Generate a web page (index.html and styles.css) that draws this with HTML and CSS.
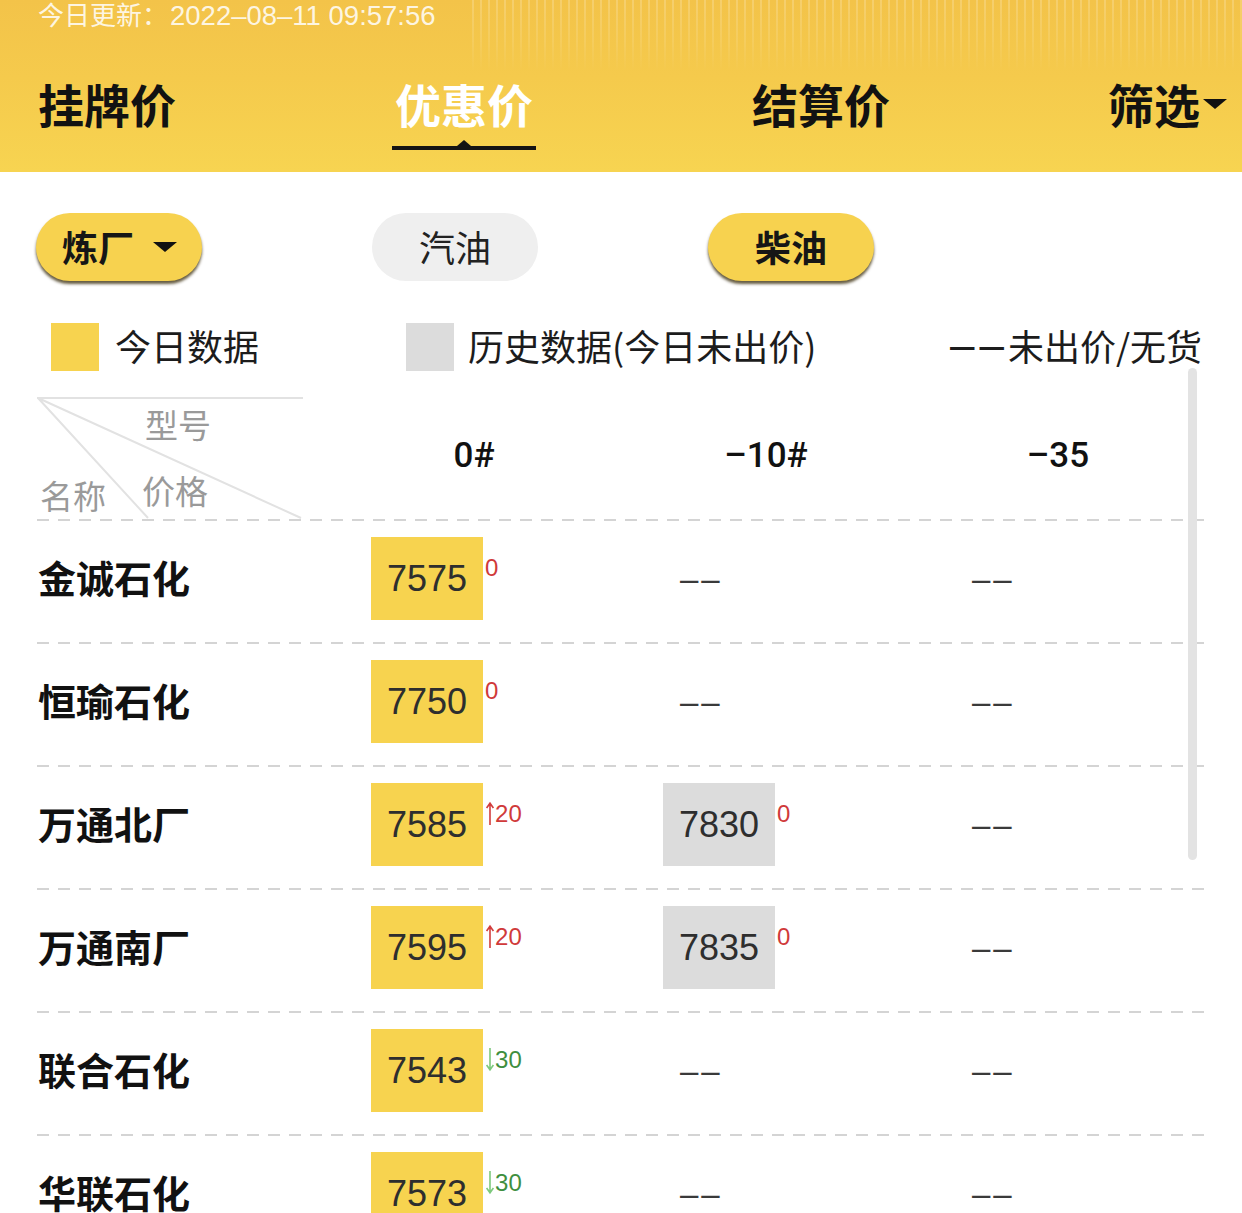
FILE: index.html
```html
<!DOCTYPE html>
<html lang="zh-CN">
<head>
<meta charset="utf-8">
<title>优惠价</title>
<link rel="stylesheet" href="styles.css">
</head>
<body>
<div class="page">
  <header class="top">
    <div class="stamp">今日更新：<span class="time">2022–08–11 09:57:56</span></div>
    <nav class="tabs">
      <div class="tab">挂牌价</div>
      <div class="tab active"><span>优惠价</span><i class="bar"></i></div>
      <div class="tab">结算价</div>
      <div class="tab filter">筛选<svg class="caret" width="26" height="12" viewBox="0 0 26 12"><path d="M1 1h24L13 11z" fill="#111"/></svg></div>
    </nav>
  </header>

  <section class="pills">
    <div class="pill on"><span>炼厂</span><svg class="caret" width="26" height="12" viewBox="0 0 26 12"><path d="M1 1h24L13 11z" fill="#111"/></svg></div>
    <div class="pill off">汽油</div>
    <div class="pill on">柴油</div>
  </section>

  <section class="legend">
    <div class="item"><i class="sq today"></i><span>今日数据</span></div>
    <div class="item"><i class="sq hist"></i><span>历史数据(今日未出价)</span></div>
    <div class="item"><span class="ldash">––</span><span>未出价/无货</span></div>
  </section>

  <div class="table">
    <div class="thead dashed">
      <div class="corner">
        <svg class="diag" width="266" height="122" viewBox="0 0 266 122">
          <path d="M0 1H266M1 1L111 121M1 1L264 121" stroke="#e2e2e2" stroke-width="2" fill="none"/>
        </svg>
        <span class="lab l1">型号</span>
        <span class="lab l2">名称</span>
        <span class="lab l3">价格</span>
      </div>
      <div class="th"><span>0#</span></div>
      <div class="th"><span>–10#</span></div>
      <div class="th"><span>–35</span></div>
    </div>

    <div class="row dashed">
      <div class="name">金诚石化</div>
      <div class="cell"><span class="box today">7575</span><span class="chg up">0</span></div>
      <div class="cell"><span class="none">––</span></div>
      <div class="cell"><span class="none">––</span></div>
    </div>

    <div class="row dashed">
      <div class="name">恒瑜石化</div>
      <div class="cell"><span class="box today">7750</span><span class="chg up">0</span></div>
      <div class="cell"><span class="none">––</span></div>
      <div class="cell"><span class="none">––</span></div>
    </div>

    <div class="row dashed">
      <div class="name">万通北厂</div>
      <div class="cell"><span class="box today">7585</span><span class="chg up"><svg class="arr" width="10" height="25" viewBox="0 0 10 25"><path d="M5 24V2.5M1.6 7L5 2.2l3.4 4.8" stroke="#d23c3c" stroke-width="1.6" fill="none"/></svg>20</span></div>
      <div class="cell"><span class="box hist">7830</span><span class="chg up">0</span></div>
      <div class="cell"><span class="none">––</span></div>
    </div>

    <div class="row dashed">
      <div class="name">万通南厂</div>
      <div class="cell"><span class="box today">7595</span><span class="chg up"><svg class="arr" width="10" height="25" viewBox="0 0 10 25"><path d="M5 24V2.5M1.6 7L5 2.2l3.4 4.8" stroke="#d23c3c" stroke-width="1.6" fill="none"/></svg>20</span></div>
      <div class="cell"><span class="box hist">7835</span><span class="chg up">0</span></div>
      <div class="cell"><span class="none">––</span></div>
    </div>

    <div class="row dashed">
      <div class="name">联合石化</div>
      <div class="cell"><span class="box today">7543</span><span class="chg down"><svg class="arr" width="10" height="25" viewBox="0 0 10 25"><path d="M5 1V22.5M1.6 18L5 22.8l3.4-4.8" stroke="#7dc97d" stroke-width="1.6" fill="none"/></svg>30</span></div>
      <div class="cell"><span class="none">––</span></div>
      <div class="cell"><span class="none">––</span></div>
    </div>

    <div class="row dashed">
      <div class="name">华联石化</div>
      <div class="cell"><span class="box today">7573</span><span class="chg down"><svg class="arr" width="10" height="25" viewBox="0 0 10 25"><path d="M5 1V22.5M1.6 18L5 22.8l3.4-4.8" stroke="#7dc97d" stroke-width="1.6" fill="none"/></svg>30</span></div>
      <div class="cell"><span class="none">––</span></div>
      <div class="cell"><span class="none">––</span></div>
    </div>
  </div>

  <div class="scroll"></div>
</div>
</body>
</html>
```

FILE: styles.css
```css
* { box-sizing: border-box; }
html, body { margin: 0; padding: 0; }
body {
  width: 1242px;
  height: 1213px;
  overflow: hidden;
  background: #fff;
  font-family: "Liberation Sans", "Noto Sans CJK SC", sans-serif;
  color: #222;
}
.page { position: relative; width: 1242px; }

/* header */
.top {
  position: relative;
  height: 172px;
  background: linear-gradient(180deg, #f3c349 0%, #f5ca4c 45%, #f7d451 100%);
  overflow: hidden;
}
.top::before {
  content: "";
  position: absolute;
  right: 0;
  top: 0;
  width: 770px;
  height: 72px;
  background: repeating-linear-gradient(90deg, rgba(255,255,255,0.20) 0 2px, rgba(255,255,255,0) 2px 8px);
  -webkit-mask-image: linear-gradient(180deg, #000 0%, rgba(0,0,0,0.5) 60%, transparent 100%);
  mask-image: linear-gradient(180deg, #000 0%, rgba(0,0,0,0.5) 60%, transparent 100%);
}
.stamp {
  position: relative;
  padding-left: 38px;
  font-family: "Noto Sans CJK SC", sans-serif;
  font-size: 26px;
  line-height: 27px;
  color: rgba(255,255,255,0.85);
  white-space: nowrap;
}
.time {
  font-family: "Liberation Sans", sans-serif;
  font-size: 27.5px;
  margin-left: 2px;
}
.tabs {
  position: relative;
  display: grid;
  grid-template-columns: 357px 357px 356px auto;
  padding-left: 38px;
  margin-top: 46px;
  align-items: start;
}
.tab {
  font-family: "Noto Sans CJK SC", sans-serif;
  font-size: 46px;
  line-height: 56px;
  font-weight: 700;
  color: #121212;
  white-space: nowrap;
}
.tab.active {
  display: inline-flex;
  flex-direction: column;
  align-items: center;
  width: 144px;
  margin-left: -3px;
  color: #fff;
}
.bar {
  position: relative;
  display: block;
  width: 144px;
  height: 4px;
  margin-top: 15px;
  background: #141414;
}
.bar::after {
  content: "";
  position: absolute;
  left: 50%;
  top: -6px;
  margin-left: -7px;
  border-left: 7px solid transparent;
  border-right: 7px solid transparent;
  border-bottom: 6px solid #141414;
}
.tab.filter { display: flex; align-items: center; }
.tab.filter .caret { margin-left: 2px; margin-top: 2px; }

/* pills */
.pills {
  display: flex;
  gap: 170px;
  padding-left: 36px;
  margin-top: 41px;
}
.pill {
  flex: none;
  width: 166px;
  height: 68px;
  border-radius: 34px;
  display: flex;
  align-items: center;
  justify-content: center;
  padding-bottom: 3px;
  font-family: "Noto Sans CJK SC", sans-serif;
  font-size: 36px;
  line-height: 40px;
  color: #161616;
}
.pill.on {
  background: #f7d24f;
  font-weight: 700;
  box-shadow: 0 3px 3px rgba(50,36,0,0.75);
}
.pill.off {
  background: #efefef;
  color: #222;
}
.pill:first-child { justify-content: flex-start; padding-left: 26px; }
.pill:first-child .caret { margin-left: 18px; margin-top: 2px; }

/* legend */
.legend {
  display: grid;
  grid-template-columns: 355px 544px auto;
  padding-left: 51px;
  margin-top: 42px;
  height: 48px;
}
.item {
  display: flex;
  align-items: center;
  font-family: "Noto Sans CJK SC", sans-serif;
  font-size: 36px;
  line-height: 44px;
  color: #1c1c1c;
  white-space: nowrap;
}
.item span { position: relative; top: -2px; }
.sq { display: block; flex: none; width: 48px; height: 48px; }
.sq.today { background: #f7d34f; margin-right: 16px; }
.sq.hist { background: #dcdcdc; margin-right: 14px; }
.ldash {
  font-family: "Liberation Sans", sans-serif;
  font-size: 44px;
  letter-spacing: 5px;
  color: #1c1c1c;
  margin-right: -1px;
}

/* table */
.dashed {
  background-image: linear-gradient(90deg, #d4d4d4 0 12px, transparent 12px 21px);
  background-size: 21px 2px;
  background-repeat: repeat-x;
  background-position: left bottom;
}
.table {
  margin-left: 37px;
  margin-top: 26px;
  width: 1168px;
}
.thead {
  display: flex;
  height: 124px;
  padding-bottom: 2px;
}
.corner {
  position: relative;
  flex: none;
  width: 334px;
  height: 122px;
}
.diag { position: absolute; left: 0; top: 0; }
.lab {
  position: absolute;
  font-family: "Noto Sans CJK SC", sans-serif;
  font-size: 33px;
  line-height: 40px;
  color: #9a9a9a;
}
.l1 { left: 108px; top: 7px; }
.l2 { left: 3px; top: 78px; }
.l3 { left: 105px; top: 73px; }
.th {
  flex: none;
  width: 292px;
  padding-top: 38px;
}
.th:last-child { width: 250px; }
.th span {
  display: block;
  width: 206px;
  text-align: center;
  font-family: "Roboto", "Liberation Sans", sans-serif;
  font-weight: 500;
  font-size: 35px;
  line-height: 42px;
  color: #111;
}

.row {
  display: flex;
  align-items: flex-start;
  height: 123px;
  padding-top: 16px;
}
.name {
  flex: none;
  width: 334px;
  padding-left: 1px;
  padding-bottom: 4px;
  font-family: "Noto Sans CJK SC", sans-serif;
  font-weight: 700;
  font-size: 38px;
  line-height: 79px;
  color: #111;
  white-space: nowrap;
}
.cell {
  flex: none;
  width: 292px;
  display: flex;
  align-items: flex-start;
}
.cell:last-child { width: 250px; }
.box {
  display: block;
  height: 83px;
  padding: 0 16px;
  font-size: 36px;
  line-height: 83px;
  color: #2e2e2e;
}
.box.today { background: #f7d34f; }
.box.hist { background: #dcdcdc; }
.none {
  display: block;
  padding-left: 17px;
  font-size: 33px;
  letter-spacing: 3px;
  line-height: 83px;
  color: #3a3a3a;
}
.chg {
  display: flex;
  align-items: flex-start;
  margin-left: 2px;
  margin-top: 19px;
  font-size: 24px;
  line-height: 24px;
}
.chg.up { color: #d03a3a; }
.chg.down { color: #3f8f3f; }
.arr { display: block; margin-top: -1px; }

.scroll {
  position: absolute;
  left: 1188px;
  top: 368px;
  width: 9px;
  height: 492px;
  border-radius: 5px;
  background: #e3e3e3;
}
```
